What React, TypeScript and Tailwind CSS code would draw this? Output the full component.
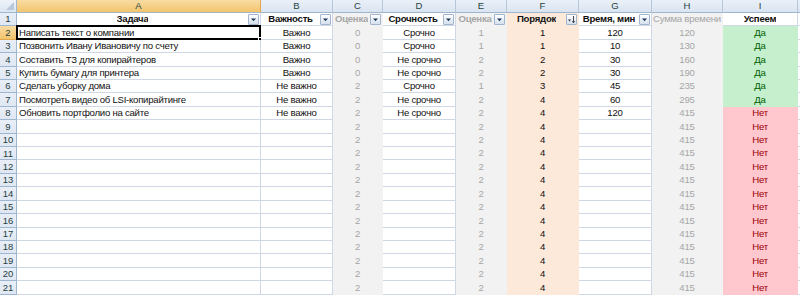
import React from "react";

type Row = [string, string, string, string, string, string, string, string, string];

const data: Row[] = [
  ["Написать текст о компании", "Важно", "0", "Срочно", "1", "1", "120", "120", "Да"],
  ["Позвонить Ивану Ивановичу по счету", "Важно", "0", "Срочно", "1", "1", "10", "130", "Да"],
  ["Составить ТЗ для копирайтеров", "Важно", "0", "Не срочно", "2", "2", "30", "160", "Да"],
  ["Купить бумагу для принтера", "Важно", "0", "Не срочно", "2", "2", "30", "190", "Да"],
  ["Сделать уборку дома", "Не важно", "2", "Срочно", "1", "3", "45", "235", "Да"],
  ["Посмотреть видео об LSI-копирайтинге", "Не важно", "2", "Не срочно", "2", "4", "60", "295", "Да"],
  ["Обновить портфолио на сайте", "Не важно", "2", "Не срочно", "2", "4", "120", "415", "Нет"],
];
for (let i = 0; i < 13; i++) data.push(["", "", "2", "", "2", "4", "", "415", "Нет"]);

const letters = ["A", "B", "C", "D", "E", "F", "G", "H", "I"];

function FilterBtn({ sort }: { sort?: boolean }) {
  return (
    <div className="absolute right-[1px] top-[1px] w-[11px] h-[11px] border border-[#a3b5cc] bg-gradient-to-b from-[#ffffff] to-[#d6e0ee] rounded-[1px] flex items-center justify-center">
      {sort ? (
        <svg width="9" height="9" viewBox="0 0 9 9">
          <path d="M1 4.5 L4 4.5 L2.5 6.5 Z" fill="#333" />
          <path d="M6.5 1 L6.5 7.5 M5.3 6.2 L6.5 7.8 L7.7 6.2" stroke="#333" strokeWidth="0.9" fill="none" />
        </svg>
      ) : (
        <svg width="7" height="7" viewBox="0 0 7 7">
          <path d="M1 2.5 L6 2.5 L3.5 5.2 Z" fill="#1f3a5a" />
        </svg>
      )}
    </div>
  );
}

const gridCls = "grid grid-cols-[17px_244px_72px_50px_73px_51px_72px_73px_71px_75px_1fr]";
const rowH = "h-[13.42px]";

export default function App() {
  const hdrBg = (i: number) =>
    i === 0
      ? "bg-gradient-to-b from-[#f9dca4] to-[#f2c46b] border-r border-[#e0a850]"
      : "bg-gradient-to-b from-[#eaf0f8] to-[#dae4f0] border-r border-[#b6c7dc]";

  const cellStyle = (c: number, r: number): string => {
    if (c === 2 || c === 4 || c === 7) return "bg-[#f2f2f2] border-[#f2f2f2] text-[#a6a6a6] justify-center";
    if (c === 5) return "bg-[#fde9d9] border-[#fde9d9] text-[#111] justify-center";
    if (c === 8)
      return data[r][8] === "Да"
        ? "bg-[#c6efce] border-[#c6efce] text-[#006100] justify-center"
        : "bg-[#ffc7ce] border-[#ffc7ce] text-[#9c0006] justify-center";
    if (c === 0) return "bg-white border-[#d0d7e5] text-[#111] justify-start pl-[2px]";
    return "bg-white border-[#d0d7e5] text-[#111] justify-center";
  };

  const headers: { t: string; cls: string; filter?: boolean; sort?: boolean }[] = [
    { t: "Задача", cls: "bg-white border-[#d0d7e5] text-[#111] font-bold", filter: true },
    { t: "Важность", cls: "bg-white border-[#d0d7e5] text-[#111] font-bold", filter: true },
    { t: "Оценка", cls: "bg-[#f2f2f2] border-[#f2f2f2] text-[#a6a6a6] font-bold", filter: true },
    { t: "Срочность", cls: "bg-white border-[#d0d7e5] text-[#111] font-bold", filter: true },
    { t: "Оценка", cls: "bg-[#f2f2f2] border-[#f2f2f2] text-[#a6a6a6] font-bold", filter: true },
    { t: "Порядок", cls: "bg-[#fde9d9] border-[#fde9d9] text-[#111] font-bold", filter: true, sort: true },
    { t: "Время, мин", cls: "bg-white border-[#d0d7e5] text-[#111] font-bold", filter: true },
    { t: "Сумма времени", cls: "bg-[#f2f2f2] border-[#f2f2f2] text-[#a6a6a6]" },
    { t: "Успеем", cls: "bg-white border-[#d0d7e5] text-[#111] font-bold" },
  ];

  return (
    <div
      className="w-[800px] h-[296px] overflow-hidden bg-white text-[9.6px] tracking-[-0.25px] leading-none"
      style={{ fontFamily: '"Liberation Sans", Arial, sans-serif' }}
    >
      {/* column letters */}
      <div className={gridCls + " h-[13px]"}>
        <div className="relative bg-gradient-to-b from-[#eef3fa] to-[#dde6f1] border-r border-b border-[#9eb6ce]">
          <div className="absolute right-[2px] bottom-[2px] w-0 h-0 border-l-[8px] border-l-transparent border-b-[8px] border-b-[#b7c8dc]" />
        </div>
        {letters.map((l, i) => (
          <div
            key={l}
            className={
              hdrBg(i) +
              " border-b border-b-[#9eb6ce] flex items-center justify-center text-[#27413e] text-[9.5px] tracking-normal"
            }
          >
            {l}
          </div>
        ))}
        <div className="bg-gradient-to-b from-[#eaf0f8] to-[#dae4f0] border-b border-[#9eb6ce]" />
      </div>

      {/* row 1 */}
      <div className={gridCls + " " + rowH}>
        <div className="bg-gradient-to-b from-[#e9eff8] to-[#dfe7f2] border-r border-b border-[#9eb6ce] flex items-center justify-center text-[#27413e] text-[9.5px] tracking-normal">
          1
        </div>
        {headers.map((h, i) => (
          <div
            key={i}
            className={
              h.cls +
              " relative border-r border-b flex items-center justify-center overflow-hidden whitespace-nowrap " +
              (h.filter ? "pr-[12px]" : "")
            }
          >
            <span className="overflow-hidden">{h.t}</span>
            {h.filter && <FilterBtn sort={h.sort} />}
          </div>
        ))}
        <div className="bg-white border-b border-[#d0d7e5]" />
      </div>

      {/* data rows */}
      {data.map((row, r) => (
        <div key={r} className={gridCls + " " + rowH}>
          <div
            className={
              (r === 0
                ? "bg-gradient-to-b from-[#f9dca4] to-[#f2c46b] border-[#e0a850]"
                : "bg-gradient-to-b from-[#e9eff8] to-[#dfe7f2] border-[#9eb6ce]") +
              " border-r border-b flex items-center justify-center text-[#27413e] text-[9.5px] tracking-normal"
            }
          >
            {r + 2}
          </div>
          {row.map((v, c) => (
            <div
              key={c}
              className={
                cellStyle(c, r) +
                " relative border-r border-b flex items-center whitespace-nowrap overflow-visible"
              }
            >
              {v}
              {r === 0 && c === 0 && (
                <div className="absolute left-[-1px] top-[-1px] right-[-1px] bottom-[-1px] border-2 border-black pointer-events-none">
                  <div className="absolute right-[-4px] bottom-[-4px] w-[5px] h-[5px] bg-black border border-white" />
                </div>
              )}
            </div>
          ))}
          <div className="bg-white border-b border-[#d0d7e5]" />
        </div>
      ))}
    </div>
  );
}
